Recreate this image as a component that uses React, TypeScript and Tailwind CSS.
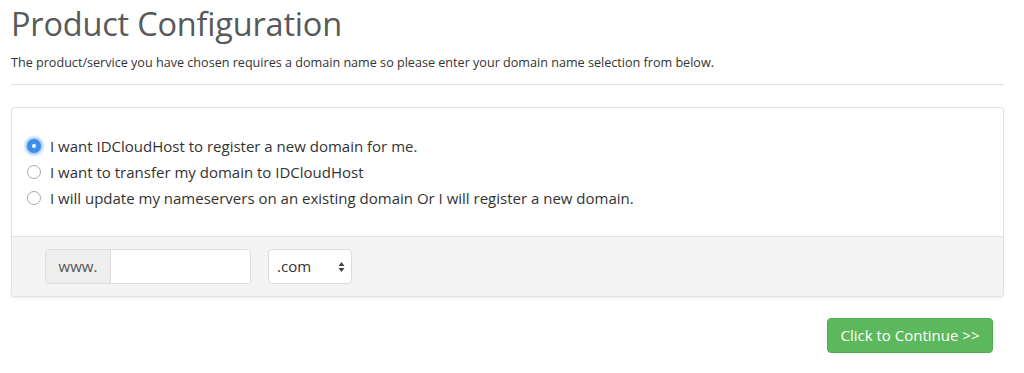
import React from "react";

export default function App() {
  return (
    <div className="w-[1024px] h-[373px] bg-white overflow-hidden font-['Open_Sans',sans-serif] text-[#333]">
      <div className="pl-[11px] pr-[20px]">
        <h1 className="text-[32.5px] leading-[32px] pt-[8px] text-[#58595b] tracking-[-0.2px]">Product Configuration</h1>
        <p className="text-[12.6px] mt-[15px] leading-[16px] text-[#333]">
          The product/service you have chosen requires a domain name so please enter your domain name selection from below.
        </p>
        <div className="mt-[13px] border-t border-[#e0e0e0]" />
        <div className="mt-[22px] border border-[#e3e3e3] rounded-[3px] shadow-[0_1px_2px_rgba(0,0,0,0.08)]">
          <div className="pt-[29px] pb-[29px] pl-[15px] flex flex-col gap-[8px] text-[15px] leading-[18px] text-[#333]">
            <label className="flex items-center gap-[9px]">
              <span className="w-[14px] h-[14px] rounded-full bg-[#3b8eea] shadow-[0_0_3px_2px_rgba(59,142,234,0.55)] flex items-center justify-center">
                <span className="w-[4px] h-[4px] rounded-full bg-white" />
              </span>
              I want IDCloudHost to register a new domain for me.
            </label>
            <label className="flex items-center gap-[9px]">
              <span className="w-[14px] h-[14px] rounded-full border border-[#aaa] bg-white" />
              I want to transfer my domain to IDCloudHost
            </label>
            <label className="flex items-center gap-[9px]">
              <span className="w-[14px] h-[14px] rounded-full border border-[#aaa] bg-white" />
              I will update my nameservers on an existing domain Or I will register a new domain.
            </label>
          </div>
          <div className="bg-[#f4f4f4] border-t border-[#e3e3e3] h-[60px] flex items-center pl-[33px] gap-[17px]">
            <div className="flex h-[35px] rounded-[4px] border border-[#ddd] overflow-hidden">
              <span className="w-[65px] bg-[#eeeeee] border-r border-[#ddd] flex items-center justify-center text-[15px] text-[#555]">www.</span>
              <span className="w-[139px] bg-white" />
            </div>
            <div className="h-[35px] w-[84px] rounded-[4px] border border-[#ddd] bg-white flex items-center justify-between pl-[8px] pr-[6px] text-[15px] text-[#333]">
              .com
              <svg width="7" height="12" viewBox="0 0 7 12">
                <path d="M3.5 1 L6.5 5 H0.5 Z" fill="#444" />
                <path d="M3.5 11 L6.5 7 H0.5 Z" fill="#444" />
              </svg>
            </div>
          </div>
        </div>
        <div className="flex justify-end mt-[21px] pr-[11px]">
          <button className="w-[166px] h-[35px] rounded-[4px] bg-[#5cb85c] border border-[#4cae4c] text-white text-[15px]">
            Click to Continue &gt;&gt;
          </button>
        </div>
      </div>
    </div>
  );
}
